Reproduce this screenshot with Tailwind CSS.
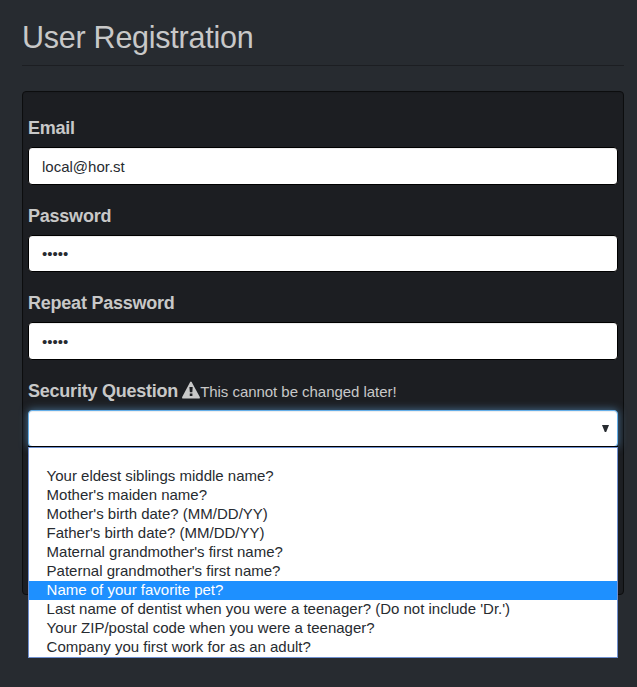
<!DOCTYPE html>
<html lang="en">
<head>
<meta charset="utf-8">
<title>User Registration</title>
<script src="https://cdn.jsdelivr.net/npm/@tailwindcss/browser@4"></script>
</head>
<body class="h-[687px] overflow-hidden bg-[#272b30] pl-[22px] pr-[13px] font-['Liberation_Sans',Arial,sans-serif] text-[15px] leading-[21px] text-[#c8c8c8]">
<h1 class="h-[66px] border-b border-[#1c1e22] pt-[19px] text-[30.5px] leading-[36px] tracking-[-0.25px]">User Registration</h1>
<form class="mt-[25px] h-[504px] rounded-[4px] border border-[#0c0d0e] bg-[#1c1e22] px-[5px] pt-[25px] shadow-[inset_0_1px_1px_rgba(0,0,0,0.05)]">
  <div class="h-[87.5px]">
    <label class="block h-[30px] text-[18px] leading-[22px] font-bold tracking-[-0.23px]">Email</label>
    <div class="h-[38px] rounded-[4px] border border-black bg-white px-[13px] pt-[8px] text-[#272b30] shadow-[inset_0_1px_1px_rgba(0,0,0,0.075)]">local@hor.st</div>
  </div>
  <div class="h-[87.5px]">
    <label class="block h-[30px] text-[18px] leading-[22px] font-bold tracking-[-0.23px]">Password</label>
    <div class="h-[37.5px] rounded-[4px] border border-black bg-white px-[13px] pt-[7px] text-[#272b30] shadow-[inset_0_1px_1px_rgba(0,0,0,0.075)]">•••••</div>
  </div>
  <div class="h-[87.5px]">
    <label class="block h-[30px] text-[18px] leading-[22px] font-bold tracking-[-0.23px]">Repeat Password</label>
    <div class="h-[38px] rounded-[4px] border border-black bg-white px-[13px] pt-[8px] text-[#272b30] shadow-[inset_0_1px_1px_rgba(0,0,0,0.075)]">•••••</div>
  </div>
  <div class="relative">
    <div class="flex h-[30px] items-start leading-[22px]">
      <span class="text-[18px] font-bold tracking-[-0.23px]">Security Question</span>
      <svg class="mt-px ml-[4px] h-[18px] w-[18px] shrink-0" viewBox="0 0 19 18" preserveAspectRatio="none"><path fill="#c8c8c8" fill-rule="evenodd" d="M8.6 1.1Q9.4-.1 10.2 1.1L18.8 16Q19.2 17.6 17.8 17.6H1.2Q-.2 17.6.2 16ZM7.8 6 8.3 11.3H10.9L11.3 6ZM8.2 12.6V15H11V12.6Z"/></svg>
      <span class="pt-px tracking-[-0.04px]">This cannot be changed later!</span>
    </div>
    <div class="flex h-[37.5px] items-center justify-end rounded-[4px] border border-[#66afe9] bg-white pr-[8px] shadow-[inset_0_1px_1px_rgba(0,0,0,0.075),0_0_8px_rgba(102,175,233,0.6)]">
      <svg class="h-[7px] w-[7px]" viewBox="0 0 7 7"><path fill="#272b30" d="M0 0H7L4.2 7H2.8Z"/></svg>
    </div>
    <div class="absolute top-[66px] left-0 w-full border-t border-black">
      <ul class="border border-[#7090cf] bg-white text-[#272b30] *:h-[19px] *:pl-[17.6px] *:leading-[17px]">
        <li></li>
        <li>Your eldest siblings middle name?</li>
        <li>Mother's maiden name?</li>
        <li>Mother's birth date? (MM/DD/YY)</li>
        <li>Father's birth date? (MM/DD/YY)</li>
        <li>Maternal grandmother's first name?</li>
        <li>Paternal grandmother's first name?</li>
        <li class="bg-[#1e90ff] text-white">Name of your favorite pet?</li>
        <li>Last name of dentist when you were a teenager? (Do not include 'Dr.')</li>
        <li>Your ZIP/postal code when you were a teenager?</li>
        <li>Company you first work for as an adult?</li>
      </ul>
    </div>
  </div>
</form>
</body>
</html>
